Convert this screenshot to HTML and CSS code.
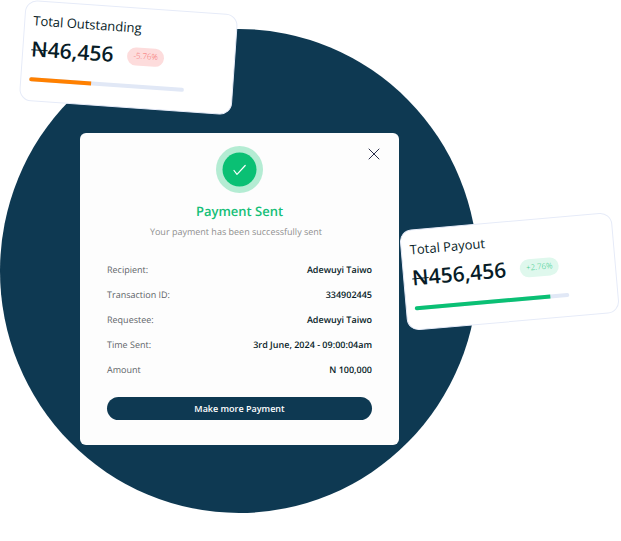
FILE: index.html
```html
<!DOCTYPE html>
<html lang="en">
<head>
<meta charset="utf-8">
<title>Payment Sent</title>
<link rel="stylesheet" href="styles.css">
</head>
<body>
<main class="scene">
  <div class="disc"></div>

  <section class="receipt" aria-labelledby="receipt-title">
    <button class="close" type="button" aria-label="Close">
      <svg viewBox="0 0 12 12" width="12" height="12"><path d="M1 1L11 11M11 1L1 11"/></svg>
    </button>
    <div class="badge">
      <svg viewBox="0 0 47 47" width="47" height="47">
        <circle class="halo" cx="23.5" cy="23.5" r="23.5"/>
        <circle class="core" cx="23.5" cy="23.5" r="17"/>
        <path class="tick" d="M18 24.5L21 28.3L29.2 19.5"/>
      </svg>
    </div>
    <h1 class="title" id="receipt-title">Payment Sent</h1>
    <p class="subtitle">Your payment has been successfully sent</p>
    <dl class="details">
      <div class="row"><dt>Recipient:</dt><dd>Adewuyi Taiwo</dd></div>
      <div class="row"><dt>Transaction ID:</dt><dd>334902445</dd></div>
      <div class="row"><dt>Requestee:</dt><dd>Adewuyi Taiwo</dd></div>
      <div class="row"><dt>Time Sent:</dt><dd>3rd June, 2024 - 09:00:04am</dd></div>
      <div class="row"><dt>Amount</dt><dd>N 100,000</dd></div>
    </dl>
    <button class="more" type="button">Make more Payment</button>
  </section>

  <article class="stat stat-outstanding">
    <h2 class="stat-title">Total Outstanding</h2>
    <div class="stat-line">
      <span class="amount"><span class="naira">N</span>46,456</span>
      <span class="chip">-5.76%</span>
    </div>
    <div class="track"><div class="fill" style="width: 40%"></div></div>
  </article>

  <article class="stat stat-payout">
    <h2 class="stat-title">Total Payout</h2>
    <div class="stat-line">
      <span class="amount"><span class="naira">N</span>456,456</span>
      <span class="chip">+2.76%</span>
    </div>
    <div class="track"><div class="fill" style="width: 88%"></div></div>
  </article>
</main>
</body>
</html>
```
FILE: styles.css
```css
* {
  box-sizing: border-box;
}

body {
  margin: 0;
  background: #fff;
  color: #071c27;
  font-family: "Open Sans", "Noto Sans", sans-serif;
  text-rendering: geometricPrecision;
}

h1,
h2,
p,
dl,
dd {
  margin: 0;
}

button {
  border: 0;
  font: inherit;
  cursor: pointer;
}

.scene {
  position: relative;
  min-height: 100vh;
  overflow: hidden;
}

.disc {
  position: absolute;
  left: 0;
  top: 29px;
  width: 478px;
  height: 484px;
  border-radius: 50%;
  background: #0e3952;
}

.receipt {
  position: absolute;
  left: 80px;
  top: 133px;
  width: 319px;
  padding: 13px 27px 25px;
  border-radius: 6px;
  background: #fdfdfd;
}

.close {
  position: absolute;
  right: 19px;
  top: 15px;
  padding: 0;
  background: none;
}

.close svg,
.badge svg {
  display: block;
}

.close path {
  fill: none;
  stroke: #292d4a;
  stroke-width: 1;
  stroke-linecap: round;
}

.badge {
  display: flex;
  justify-content: center;
}

.halo {
  fill: #b4ecd3;
}

.core {
  fill: #0ac074;
}

.tick {
  fill: none;
  stroke: #fff;
  stroke-width: 1.2;
  stroke-linecap: round;
  stroke-linejoin: round;
}

.title {
  margin-top: 8px;
  color: #16bf78;
  font-size: 13px;
  font-weight: 600;
  line-height: 20px;
  text-align: center;
}

.subtitle {
  margin-top: 4px;
  padding-right: 7px;
  color: #8f8f8f;
  font-size: 9px;
  line-height: 14px;
  text-align: center;
}

.details {
  display: grid;
  gap: 11px;
  margin-top: 24px;
}

.row {
  display: flex;
  justify-content: space-between;
  font-size: 9px;
  line-height: 14px;
}

.row dt {
  color: #5e6468;
}

.row dd {
  font-weight: 600;
}

.more {
  display: block;
  width: 100%;
  margin-top: 20px;
  padding: 4px;
  border-radius: 12px;
  background: #0e3952;
  color: #fff;
  font-size: 9px;
  font-weight: 600;
  line-height: 15px;
}

.stat {
  position: absolute;
  width: 213px;
  padding: 9px 8px 19px;
  border: 1px solid #e6ebf8;
  border-radius: 12px;
  background: #fff;
}

.stat-outstanding {
  left: 22px;
  top: 7px;
  transform: rotate(4deg);
}

.stat-payout {
  left: 403px;
  top: 221px;
  transform: rotate(-5deg);
}

.stat-title {
  font-size: 13px;
  font-weight: 400;
  line-height: 20px;
}

.stat-line {
  display: flex;
  align-items: center;
  gap: 14px;
  margin-top: 4px;
}

.amount {
  font-size: 21px;
  font-weight: 600;
  line-height: 30px;
}

.naira {
  text-decoration: line-through;
  text-decoration-thickness: 1px;
}

.chip {
  padding: 2px 6px;
  border-radius: 9px;
  font-size: 8px;
  font-weight: 300;
  line-height: 14px;
}

.stat-outstanding .chip {
  background: #fddcdc;
  color: #f56f6f;
}

.stat-payout .chip {
  background: #dff8ed;
  color: #2cc886;
}

.track {
  width: 155px;
  height: 4px;
  margin-top: 13px;
  border-radius: 2px;
  background: #e1e8f6;
}

.fill {
  height: 100%;
  border-radius: 2px 0 0 2px;
}

.stat-outstanding .fill {
  background: #ff8000;
}

.stat-payout .fill {
  background: #0ac074;
}
```
